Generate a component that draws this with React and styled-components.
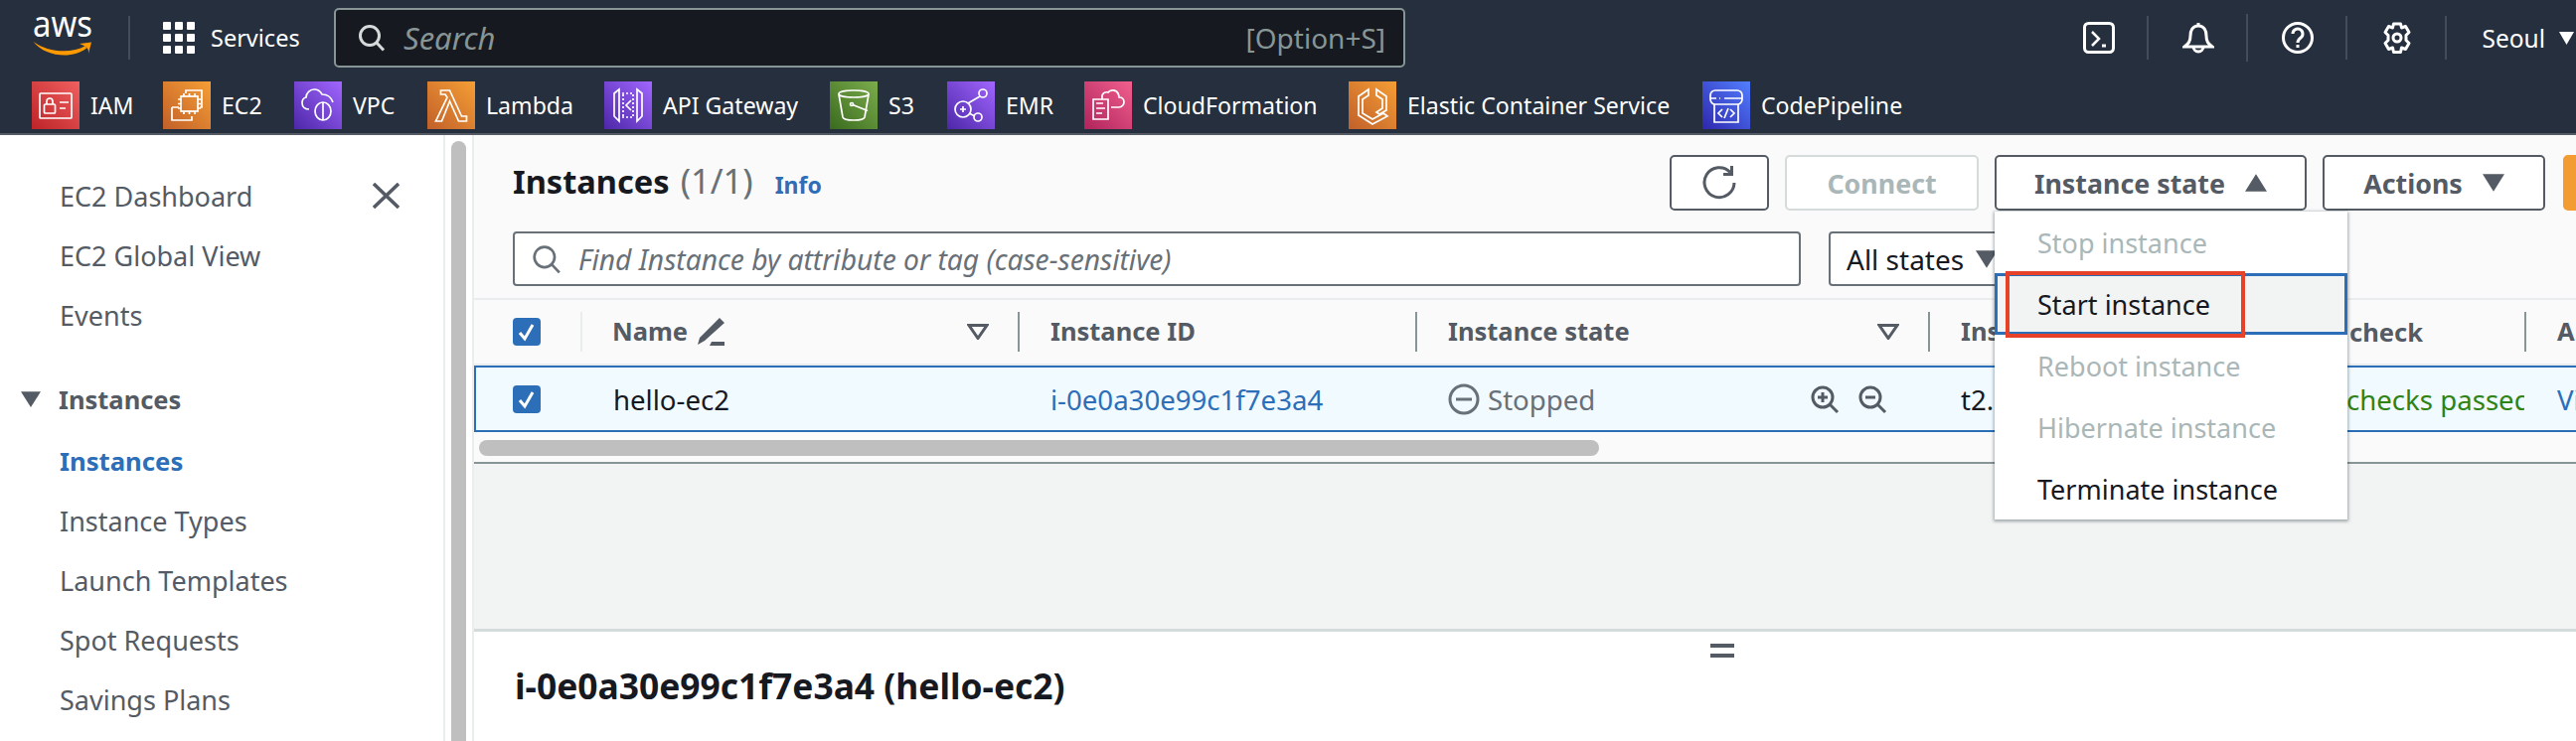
import React from "react";
import styled, { createGlobalStyle } from "styled-components";

const Global = createGlobalStyle`
  html, body { margin: 0; padding: 0; overflow: hidden; background: #fff; }
  * { box-sizing: border-box; }
  body { font-family: "Noto Sans", "Open Sans", sans-serif; color: #16191f; }
`;

const Page = styled.div`width: 2592px; height: 746px; overflow: hidden; display: flex; flex-direction: column;`;
const TopNav = styled.header`height: 136px; flex-shrink: 0; background: #252f3e; border-bottom: 2px solid #545b64; color: #fff;`;
const NavRow = styled.div`height: 76px; padding-left: 33px; display: flex; align-items: center;`;
const Logo = styled.svg`width: 60px; height: 40px; display: block; overflow: visible; margin-top: -2px; margin-right: 36px; flex-shrink: 0;`;
const NavDivider = styled.span`width: 2px; height: 44px; background: #414d5c; margin-right: 33px; margin-top: -1px; flex-shrink: 0;`;
const GridIcon = styled.svg`width: 32px; height: 32px; margin-right: 16px; flex-shrink: 0;`;
const ServicesLabel = styled.span`width: 124px; font-size: 23.5px; flex-shrink: 0;`;
const SearchBox = styled.div`
  width: 1078px; height: 60px; flex-shrink: 0; margin-top: -1px; background: #16191f; border: 2px solid #879596; border-radius: 5px;
  display: flex; align-items: center; padding: 0 18px 0 22px; color: #879596; font-size: 28px;
`;
const SearchText = styled.span`font-style: italic; font-size: 31px; margin-left: 18px; flex: 1;`;
const NavRight = styled.div`margin-left: auto; display: flex; align-items: center; padding-right: 2px;`;
const NavIconCell = styled.div`width: 100px; height: ${p => p.$tall ? 48 : 44}px; display: flex; align-items: center; justify-content: center; border-right: 2px solid #414d5c; padding-left: 2px;`;
const Region = styled.div`margin-left: 35px; display: flex; align-items: center; gap: 14px; font-size: 24.5px;`;
const FavRow = styled.div`height: 58px; padding: 6px 0 4px 32px; display: flex; align-items: center;`;
const Fav = styled.div`width: ${p => p.$w}px; display: flex; align-items: center; gap: 11px; font-size: 23.1px; flex-shrink: 0; white-space: nowrap;`;
const Tile = styled.svg`width: 48px; height: 48px; display: block; flex-shrink: 0;`;

const Body = styled.div`flex: 1; display: flex; min-height: 0; position: relative;`;
const Sidebar = styled.nav`width: 446px; flex-shrink: 0; padding-top: 31px; background: #fff; color: #545b64; font-size: 27px;`;
const NavItem = styled.div`
  height: 60px; display: flex; align-items: center; justify-content: space-between; padding: 0 44px 0 60px;
  color: ${p => p.$active ? "#2c6fb8" : "#545b64"}; font-weight: ${p => p.$active ? 700 : 400}; font-size: ${p => p.$active ? 25.7 : 27}px;
`;
const SectionHead = styled.div`height: 60px; margin: 25px 0 2px; padding-left: 21px; display: flex; align-items: center; gap: 18px; font-weight: 700; font-size: 25.5px;`;
const Track = styled.div`width: 31px; flex-shrink: 0; background: #fff; border-left: 2px solid #eaeded; border-right: 2px solid #eaeded; padding: 6px 6px 0;`;
const Thumb = styled.div`width: 15px; height: 100%; background: #bfbfbf; border-radius: 8px 8px 0 0;`;

const Main = styled.main`flex: 1; min-width: 0; position: relative; display: flex; flex-direction: column; overflow: hidden; background: #f2f3f3;`;
const Tools = styled.section`height: 164px; flex-shrink: 0; background: #fafafa; padding: 20px 0 0 39px;`;
const ToolRow = styled.div`display: flex; align-items: center; height: 56px;`;
const TitleBlock = styled.div`width: 1164px; flex-shrink: 0; display: flex; align-items: baseline; margin-top: -5px;`;
const Title = styled.h1`margin: 0; font-size: 32.6px; font-weight: 700; color: #16191f;`;
const Count = styled.span`margin-left: 11px; font-size: 34.5px; color: #687078;`;
const Info = styled.span`margin-left: 22px; font-size: 23px; font-weight: 700; color: #2c6fb8;`;
const Btn = styled.button`
  height: 56px; width: ${p => p.$w}px; flex-shrink: 0; margin-left: ${p => p.$ml ?? 16}px; background: ${p => p.$bg || "#fff"};
  border: 2px solid ${p => p.$off ? "#d5dbdb" : p.$bg || "#545b64"}; border-radius: 5px;
  color: ${p => p.$off ? "#aab7b8" : "#545b64"}; font: 700 26.8px "Noto Sans", sans-serif;
  display: flex; align-items: center; justify-content: center; gap: 20px; padding: 0;
`;
const FilterRow = styled(ToolRow)`margin-top: 21px; height: 55px;`;
const FilterBox = styled.div`
  width: 1296px; height: 55px; flex-shrink: 0; background: #fff; border: 2px solid #687078; border-radius: 4px;
  display: flex; align-items: center; padding-left: 17px; gap: 17px; font-size: 28.2px; font-style: italic; color: #687078;
`;
const StateSelect = styled.div`
  width: 300px; height: 55px; flex-shrink: 0; margin-left: 28px; background: #fff; border: 2px solid #687078; border-radius: 4px;
  display: flex; align-items: center; padding-left: 16px; gap: 12px; font-size: 28px; color: #16191f;
`;

const TableHead = styled.div`height: 68px; flex-shrink: 0; background: #fafafa; border-top: 2px solid #eaeded; border-bottom: 2px solid #eaeded; display: flex; align-items: center;`;
const HCell = styled.div`
  width: ${p => p.$w}px; flex-shrink: 0; height: 40px; display: flex; align-items: center; gap: 9px;
  padding-left: ${p => p.$pl ?? 31}px; padding-right: ${p => p.$pr ?? 29}px; border-left: 2px solid ${p => p.$light ? "#eaeded" : "#879596"};
  font-size: 25.5px; font-weight: 700; color: #545b64; white-space: nowrap; overflow: hidden;
`;
const HeadText = styled.span`margin-top: -2px;`;
const StatusLabel = styled.span`margin-left: auto;`;
const CheckCell = styled.div`width: 107px; flex-shrink: 0; padding-left: 39px; display: flex; align-items: center;`;
const FilterTri = styled.svg`width: 22px; height: 16px; margin-left: auto; flex-shrink: 0;`;
const Row = styled.div`height: 67px; flex-shrink: 0; background: #f1faff; border: 2px solid #2c6fb8; border-width: 2px 0 2px 2px; display: flex; align-items: center;`;
const RowCheck = styled(CheckCell)`width: 105px; padding-left: 37px;`;
const Cell = styled.div`
  width: ${p => p.$w}px; flex-shrink: 0; padding-left: ${p => p.$pl ?? 33}px; display: flex; align-items: center; gap: 8px;
  font-size: 27.6px; color: ${p => p.$c || "#16191f"}; white-space: nowrap; overflow: hidden;
`;
const ZoomIcons = styled.div`margin-left: auto; padding-right: 41px; display: flex; gap: 18px;`;
const Checkbox = styled.svg`width: 28px; height: 28px; display: block;`;
const HScrollArea = styled.div`height: 32px; flex-shrink: 0; background: #fafafa; padding: 8px 0 0 5px; border-bottom: 2px solid #879596; box-shadow: 0 1px 2px rgba(0,0,0,.2);`;
const HThumb = styled.div`width: 1127px; height: 16px; background: #bfbfbf; border-radius: 8px;`;
const Gap = styled.div`flex: 1; min-height: 0; background: #f2f3f3;`;
const Lower = styled.section`height: 113px; flex-shrink: 0; background: #fff; border-top: 3px solid #d5dbdb; padding-top: 12px;`;
const Handle = styled.div`width: 24px; height: 14px; margin-left: 1244px; border-top: 4px solid #545b64; border-bottom: 4px solid #545b64;`;
const DetailTitle = styled.h2`margin: 8px 0 0 41px; font-size: 35.4px; line-height: 40px; font-weight: 700; color: #16191f;`;

const Menu = styled.div`position: absolute; left: 1530px; top: 77px; width: 355px; background: #fff; box-shadow: 0 1px 3px 1px rgba(0,28,36,.35); display: flex; flex-direction: column;`;
const MenuItem = styled.div`
  height: 62px; display: flex; align-items: center; padding-left: ${p => p.$hl ? 40 : 43}px; font-size: 27px;
  color: ${p => p.$off ? "#aab7b8" : "#16191f"};
  ${p => p.$hl && "background: #f2f3f3; border: 3px solid #2c6fb8;"}
`;
const Callout = styled.div`position: absolute; left: 11px; top: 60px; width: 241px; height: 67px; border: 4px solid #e8412a;`;

const g = (id, a, b) => (
  <defs><linearGradient id={id} x1="0" y1="1" x2="1" y2="0"><stop offset="0" stopColor={a} /><stop offset="1" stopColor={b} /></linearGradient></defs>
);
const S = { fill: "none", stroke: "#fff", strokeWidth: 1.7 };
const TileIcon = ({ id, a, b, children }) => (
  <Tile viewBox="0 0 48 48">{g(id, a, b)}<rect width="48" height="48" fill={`url(#${id})`} /><g {...S}>{children}</g></Tile>
);
const RED = ["#bd2328", "#f0605f"], ORG = ["#c1602a", "#f59e35"], PUR = ["#4d27a8", "#a166ff"], GRN = ["#3a6b1e", "#7cac4c"], PNK = ["#b0245c", "#f0608e"], BLU = ["#2e27ad", "#527fff"];

const favs = [
  ["IAM", 132, RED, <><rect x="8" y="12" width="32" height="25" rx="1" /><rect x="12.500" y="23" width="11" height="9" rx="1" /><path d="M15 23v-3a3 3 0 0 1 6 0v3M28 21h9M28 27h6" /></>],
  ["EC2", 132, ORG, <><rect x="18" y="15" width="17" height="15" /><path d="M21 12v3M26.500 12v3M32 12v3M21 30v3M26.500 30v3M32 30v3M15 18h3M15 22.500h3M15 27h3M35 18h3M35 22.500h3M35 27h3" /><path d="M23 12V9h16v17h-2M9 26h7M9 26v13h20v-4" /></>],
  ["VPC", 134, PUR, <><path d="M15 28c-4 0-7-2.500-7-6.500 0-3 2-5 4-5.500 0-4.500 4-8 8-8s6.500 2 8 5c4 0 9 2 11 8" /><ellipse cx="29" cy="30" rx="8" ry="9" /><path d="M29 21v18" /></>],
  ["Lambda", 178, ORG, <path d="M13.500 9h9l12 26h5v5h-8l-9-20-8 20H8.500l11.500-24-2-3h-4.500z" />],
  ["API Gateway", 227, PUR, <><path d="M15 8 10 12v23l5 5zM33 8l5 4v23l-5 5z" /><path d="M18 12h12M18 36h12" strokeDasharray="2 2" /><path d="M19 13v22M29 13v22" strokeDasharray="2 2" /><path d="m27 19-5 5 5 5" /></>],
  ["S3", 118, GRN, <><ellipse cx="24" cy="12.500" rx="15" ry="3.500" /><path d="M9 13l4 23c.5 2 5 3 11 3s10.500-1 11-3l4-23" /><circle cx="22" cy="23" r="1.500" /><path d="m23 23.500 15 6" /></>],
  ["EMR", 138, PUR, <><circle cx="16" cy="28" r="8" /><path d="M13 28h6M16 25v6" /><circle cx="36" cy="12" r="4" /><circle cx="31" cy="36" r="4" /><path d="m21 22 12-7M22 32l6 3" /></>],
  ["CloudFormation", 266, PNK, <><path d="M9 18h15v20H9z" /><path d="M12 22h7M12 27h9M12 32h6" /><path d="M18 18v-4a5 5 0 0 1 6-3c2-3 8-3 10 1 1 2 1 3 1 4 4 0 5 3 5 5s-2 5-5 5h-8" /></>],
  ["Elastic Container Service", 356, ORG, <path d="M20 8 10 15v19l14 9 15-8-4-3-11 6-10-6V18l6-4zM28 8l10 7v14l-7 4-3-2 6-4V18l-6-4z" />],
  ["CodePipeline", 250, BLU, <><rect x="8" y="9" width="32" height="14" rx="5" /><path d="M8 17h6M17 17h1M22 17h18" /><path d="M12 23v18h24V23" /><path d="m20 28-4 4 4 4M28 28l4 4-4 4M26 27l-4 10" /></>],
];

const Magnifier = ({ size = 28, color = "#d5dbdb", w = 3 }) => (
  <svg width={size} height={size} viewBox="0 0 28 28" fill="none" stroke={color} strokeWidth={w}><circle cx="12" cy="12" r="9.500" /><path d="m18.500 18.500 7.500 8" /></svg>
);
const Caret = ({ up, w = 16, h = 16, color = "#545b64" }) => (
  <svg width={w} height={h} viewBox="0 0 16 16" preserveAspectRatio="none"><path d={up ? "M8 1l8 14H0z" : "M0 1h16L8 15z"} fill={color} /></svg>
);
const Check = () => (
  <Checkbox viewBox="0 0 28 28"><rect width="28" height="28" rx="4" fill="#2c6fb8" /><path d="m7 15 5 6 8-14" fill="none" stroke="#fff" strokeWidth="3" /></Checkbox>
);
const ZoomGlass = ({ plus }) => (
  <svg width="30" height="30" viewBox="0 0 30 30" fill="none" stroke="#545b64" strokeWidth="3"><circle cx="13" cy="13" r="10" /><path d="m20 20 8 8M8 13h10" />{plus && <path d="M13 8v10" />}</svg>
);
const FilterCaret = () => (
  <FilterTri viewBox="0 0 22 16"><path d="M2 1.500h18L11 14.500z" fill="none" stroke="#545b64" strokeWidth="3" /></FilterTri>
);

export default function App() {
  return (
    <Page>
      <Global />
      <TopNav>
        <NavRow>
          <Logo viewBox="0 0 60 40">
            <text x="0" y="20" fontFamily="Noto Sans, sans-serif" fontSize="36" fill="#fff" textLength="60" lengthAdjust="spacingAndGlyphs">aws</text>
            <path d="M.5 25C14 35 38 38 53 29l1 2.500C40 43 12 40 .5 25z" fill="#f90" />
            <path d="M47 27l12-1.500L56 37c.5-4-.5-7-9-10z" fill="#f90" />
          </Logo>
          <NavDivider />
          <GridIcon viewBox="0 0 32 32" fill="#fff">
            {[0, 12, 24].flatMap(y => [0, 12, 24].map(x => <rect key={`${x}-${y}`} x={x} y={y} width="8" height="8" rx="1" />))}
          </GridIcon>
          <ServicesLabel>Services</ServicesLabel>
          <SearchBox>
            <Magnifier />
            <SearchText>Search</SearchText>
            <span>[Option+S]</span>
          </SearchBox>
          <NavRight>
            <NavIconCell>
              <svg width="32" height="32" viewBox="0 0 32 32" fill="none" stroke="#fff" strokeWidth="3"><rect x="1.500" y="1.500" width="29" height="29" rx="4" /><path d="m9 10 7 7-7 7" strokeWidth="2.500" /><path d="M19 24h4" /></svg>
            </NavIconCell>
            <NavIconCell $tall>
              <svg width="32" height="32" viewBox="0 0 32 32" fill="none" stroke="#fff" strokeWidth="3"><path d="M16 1v3M16 4c-6 0-8 5-8 10 0 6-2 8-6 11h28c-4-3-6-5-6-11 0-5-2-10-8-10z" /><path d="M11 25a5 5 0 0 0 10 0" /></svg>
            </NavIconCell>
            <NavIconCell>
              <svg width="32" height="32" viewBox="0 0 32 32" fill="none" stroke="#fff" strokeWidth="3"><circle cx="16" cy="16" r="14.500" /><path d="M11 12a5 5 0 1 1 8 4c-2 1.500-3 2.500-3 5" /><path d="M16 23v3" /></svg>
            </NavIconCell>
            <NavIconCell>
              <svg width="32" height="32" viewBox="0 0 32 32" fill="none" stroke="#fff" strokeWidth="3"><path d="M12.500 2h7l1 4 4-1.500 3.500 6-3 3v5l3 3-3.500 6-4-1.500-1 4.500h-7l-1-4.500-4 1.500L4 21.500l3-3v-5l-3-3 3.500-6 4 1.500z" strokeLinejoin="round" /><circle cx="16" cy="16" r="4" /></svg>
            </NavIconCell>
            <Region>Seoul <Caret color="#fff" w={15} h={15} /></Region>
          </NavRight>
        </NavRow>
        <FavRow>
          {favs.map(([label, w, [a, b], art], i) => (
            <Fav key={label} $w={w}><TileIcon id={`t${i}`} a={a} b={b}>{art}</TileIcon>{label}</Fav>
          ))}
        </FavRow>
      </TopNav>
      <Body>
        <Sidebar>
          <NavItem>
            EC2 Dashboard
            <svg width="27" height="26" viewBox="0 0 27 26" fill="none" stroke="#545b64" strokeWidth="3.500"><path d="m1 1 25 24M26 1 1 25" /></svg>
          </NavItem>
          <NavItem>EC2 Global View</NavItem>
          <NavItem>Events</NavItem>
          <SectionHead><Caret w={20} h={18} />Instances</SectionHead>
          <NavItem $active>Instances</NavItem>
          <NavItem>Instance Types</NavItem>
          <NavItem>Launch Templates</NavItem>
          <NavItem>Spot Requests</NavItem>
          <NavItem>Savings Plans</NavItem>
        </Sidebar>
        <Track><Thumb /></Track>
        <Main>
          <Tools>
            <ToolRow>
              <TitleBlock>
                <Title>Instances</Title><Count>(1/1)</Count><Info>Info</Info>
              </TitleBlock>
              <Btn $w={100} $ml={0}>
                <svg width="36" height="36" viewBox="0 0 36 36" fill="none" stroke="#545b64" strokeWidth="3"><path d="M29 7.500A15 15 0 1 0 33 18" /><path d="M30.500 1v8.500H22" /></svg>
              </Btn>
              <Btn $w={195} $off>Connect</Btn>
              <Btn $w={314}>Instance state <Caret up w={22} h={20} /></Btn>
              <Btn $w={224}>Actions <Caret w={22} h={20} /></Btn>
              <Btn $w={100} $ml={18} $bg="#f39c33" />
            </ToolRow>
            <FilterRow>
              <FilterBox><Magnifier size={30} color="#687078" w={2.500} />Find Instance by attribute or tag (case-sensitive)</FilterBox>
              <StateSelect>All states <Caret w={22} h={20} /></StateSelect>
            </FilterRow>
          </Tools>
          <TableHead>
            <CheckCell><Check /></CheckCell>
            <HCell $w={440} $pl={30} $light>
              <HeadText>Name</HeadText>
              <svg width="28" height="28" viewBox="0 0 28 28" fill="#545b64"><path d="M23 0l5 5L8 23l-7 4 2-7zM15 24h13v4H13z" /></svg>
              <FilterCaret />
            </HCell>
            <HCell $w={400}><HeadText>Instance ID</HeadText></HCell>
            <HCell $w={516}><HeadText>Instance state</HeadText><FilterCaret /></HCell>
            <HCell $w={600} $pr={102}><HeadText>Instance type</HeadText><StatusLabel>Status check</StatusLabel></HCell>
            <HCell $w={100}><HeadText>Alarm status</HeadText></HCell>
          </TableHead>
          <Row>
            <RowCheck><Check /></RowCheck>
            <Cell $w={440}>hello-ec2</Cell>
            <Cell $w={400} $c="#2c6fb8">i-0e0a30e99c1f7e3a4</Cell>
            <Cell $w={516} $c="#687078">
              <svg width="32" height="32" viewBox="0 0 32 32" fill="none" stroke="#687078" strokeWidth="3"><circle cx="16" cy="16" r="14" /><path d="M8 16h16" /></svg>
              Stopped
              <ZoomIcons><ZoomGlass plus /><ZoomGlass /></ZoomIcons>
            </Cell>
            <Cell $w={372}>t2.micro</Cell>
            <Cell $w={228} $pl={0} $c="#2f8313">2/2 checks passed</Cell>
            <Cell $w={100} $pl={33} $c="#2c6fb8">View alarms</Cell>
          </Row>
          <HScrollArea><HThumb /></HScrollArea>
          <Gap />
          <Lower>
            <Handle />
            <DetailTitle>i-0e0a30e99c1f7e3a4 (hello-ec2)</DetailTitle>
          </Lower>
          <Menu>
            <MenuItem $off>Stop instance</MenuItem>
            <MenuItem $hl>Start instance</MenuItem>
            <MenuItem $off>Reboot instance</MenuItem>
            <MenuItem $off>Hibernate instance</MenuItem>
            <MenuItem>Terminate instance</MenuItem>
            <Callout />
          </Menu>
        </Main>
      </Body>
    </Page>
  );
}
